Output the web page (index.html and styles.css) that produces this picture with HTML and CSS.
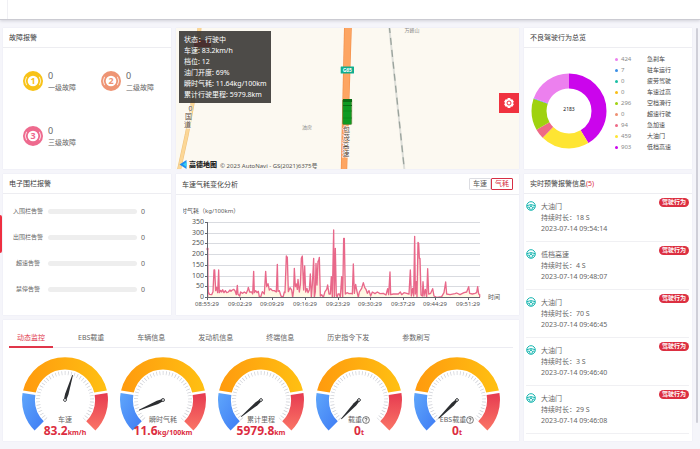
FILE: index.html
```html
<!DOCTYPE html>
<html lang="zh-CN">
<head>
<meta charset="utf-8">
<meta name="viewport" content="width=device-width, initial-scale=1">
<title>车辆监控</title>
<link rel="stylesheet" href="styles.css">
</head>
<body>
<svg class="defs" aria-hidden="true">
  <defs>
    <linearGradient id="blue" x1="0" y1="0" x2="1" y2="1"><stop offset="0" stop-color="#5fa6fb"/><stop offset="1" stop-color="#3f7cf4"/></linearGradient>
    <linearGradient id="orange" x1="0" y1="0" x2="1" y2="0"><stop offset="0" stop-color="#ff9a0e"/><stop offset="1" stop-color="#ffc012"/></linearGradient>
    <linearGradient id="red" x1="0" y1="0" x2="0" y2="1"><stop offset="0" stop-color="#e63a50"/><stop offset="1" stop-color="#fa7566"/></linearGradient>
    <symbol id="dial" viewBox="-43 -43 86 74">
      <path fill="url(#blue)" d="M-30.4 30.4A43 43 0 0 1 -42.4 -7L-29.6 -4.9A30 30 0 0 0 -21.2 21.2Z"/>
      <path fill="url(#orange)" d="M-41.9 -9.5A43 43 0 0 1 41.9 -9.5L29.2 -7.4A30 30 0 0 0 -29.2 -7.4Z"/>
      <path fill="url(#red)" d="M42.4 -7A43 43 0 0 1 30.4 30.4L21.2 21.2A30 30 0 0 0 29.6 -4.9Z"/>
      <path fill="none" stroke="#c9cbd2" stroke-width="4" pathLength="270" stroke-dasharray="1.4 5.325" d="M-19.1 19.1A27 27 0 1 1 19.1 19.1"/>
    </symbol>
    <symbol id="needle" viewBox="-43 -43 86 74">
      <path fill="#2c2e31" d="M-.4 -26H.4L1.7 -6L1.2 0H-1.2L-1.7 -6Z"/>
      <circle r="1.4" fill="#fff" stroke="#2c2e31" stroke-width=".9"/>
    </symbol>
    <symbol id="wheel" viewBox="0 0 10 10">
      <g fill="none" stroke="#16b5b0" stroke-width="1"><circle cx="5" cy="5" r="4.3"/><path d="M1 4.6Q5 2.6 9 4.6M1.2 6.2H3.4L4.2 9M8.8 6.2H6.6L5.8 9"/></g>
      <circle cx="5" cy="5.2" r="1" fill="#16b5b0"/>
    </symbol>
    <symbol id="ring" viewBox="0 0 20 20">
      <circle cx="10" cy="10" r="10"/>
      <circle cx="10" cy="10" r="5.3" fill="#fff"/>
      <path fill="none" stroke="#fff" stroke-width=".8" d="M3.600 5.800A7.700 7.700 0 0 0 3.600 14.200M16.400 5.800A7.700 7.700 0 0 1 16.400 14.200"/>
    </symbol>
    <symbol id="help" viewBox="0 0 8 8">
      <circle cx="4" cy="4" r="3.4" fill="none" stroke="#444" stroke-width=".7"/>
      <path fill="none" stroke="#444" stroke-width=".8" d="M2.9 3.2Q3 2.1 4 2.1T5.1 3.1Q5.1 3.8 4 4.2V4.8M4 5.4V6.2"/>
    </symbol>
  </defs>
</svg>

<header class="topbar"></header>
<button class="drawer" type="button" aria-label="展开"></button>

<main class="board">
  <section class="card fault">
    <h2 class="card-title">故障报警</h2>
    <ul class="fault-list">
      <li class="fault-item level1"><svg class="fault-icon" viewBox="0 0 20 20"><use href="#ring"/><text x="10" y="13">1</text></svg><p><b>0</b>一级故障</p></li>
      <li class="fault-item level2"><svg class="fault-icon" viewBox="0 0 20 20"><use href="#ring"/><text x="10" y="13">2</text></svg><p><b>0</b>二级故障</p></li>
      <li class="fault-item level3"><svg class="fault-icon" viewBox="0 0 20 20"><use href="#ring"/><text x="10" y="13">3</text></svg><p><b>0</b>三级故障</p></li>
    </ul>
  </section>

  <section class="card map">
    <svg class="map-canvas" viewBox="0 0 343 141" preserveAspectRatio="xMidYMid slice">
      <path class="road-edge" d="M23.5 -1L20 50L16.3 77L10.7 107L3 142"/>
      <path class="road" d="M23.5 -1L20 50L16.3 77L10.7 107L3 142"/>
      <path fill="#f3904a" d="M168 0H175.800L171.200 141H164.800Z"/>
      <path fill="#fda562" d="M168.700 0H175.100L170.600 141H165.500Z"/>
      <path fill="none" stroke="#dedfda" stroke-width="2" d="M213.300 0L228.300 141"/>
      <path fill="none" stroke="#9aa39c" stroke-width="1.300" stroke-dasharray="7 5" d="M213.300 -2L228.300 141"/>
      <rect x="18" y="12" width="17" height="7" rx="1" fill="#d81e2c"/>
      <g class="road-name">
        <text x="14.500" y="83">0</text><text x="12.500" y="91">国</text><text x="11.500" y="99">道</text>
        <text x="170.500" y="104">包</text><text x="170.500" y="112">茂</text><text x="170" y="120">高</text><text x="170" y="128">速</text>
      </g>
      <rect x="164.700" y="38.500" width="13.300" height="7" rx=".5" fill="#10ae8e"/>
      <text class="shield" x="171.300" y="44">G65</text>
      <rect x="166.700" y="71.500" width="9" height="25" rx="1" fill="#0f9a22" stroke="#6b7a3a" stroke-width=".6"/>
      <path fill="#0a6c14" d="M167 71H176V74H167ZM167 77H176V78H167Z"/>
      <path stroke="#0b8119" stroke-width=".6" d="M167 83H176M167 90H176"/>
      <text class="place" x="131" y="101">油房</text>
      <text class="place" x="236" y="4">万峰山</text>
      <path fill="#1d8df0" d="M3.500 136.500L10.500 132V141Z"/><path fill="#35d0ee" d="M7 136.500L10.500 134V139Z"/>
      <text class="brand" x="13" y="139">高德地图</text>
      <text class="copyright" x="44" y="140">© 2023 AutoNavi - GS(2021)6375号</text>
    </svg>
    <ul class="status">
      <li>状态：行驶中</li>
      <li>车速: 83.2km/h</li>
      <li>档位: 12</li>
      <li>油门开度: 69%</li>
      <li>瞬时气耗: 11.64kg/100km</li>
      <li>累计行驶里程: 5979.8km</li>
    </ul>
    <button class="settings" type="button" aria-label="设置">
      <svg viewBox="0 0 12 12"><path fill="#fff" d="M4.700 1H7.300L7.700 2.600L9.300 2.200L10.900 4.800L9.900 6L10.900 7.200L9.300 9.800L7.700 9.400L7.300 11H4.700L4.300 9.400L2.700 9.800L1.100 7.200L2.100 6L1.100 4.800L2.700 2.200L4.300 2.600Z"/><circle cx="6" cy="6" r="2" fill="#fff" stroke="#f0323f"/></svg>
    </button>
  </section>

  <section class="card behaviour">
    <h2 class="card-title">不良驾驶行为总览</h2>
    <div class="behaviour-body">
      <svg class="donut" viewBox="0 0 76 76">
        <g fill="none" stroke-width="15" transform="rotate(-90 38 38)">
          <circle cx="38" cy="38" r="30" pathLength="2183" stroke="#cb05ec" stroke-dasharray="903 1280"/>
          <circle cx="38" cy="38" r="30" pathLength="2183" stroke="#fee533" stroke-dasharray="459 1724" stroke-dashoffset="-903"/>
          <circle cx="38" cy="38" r="30" pathLength="2183" stroke="#ee6a86" stroke-dasharray="94 2089" stroke-dashoffset="-1362"/>
          <circle cx="38" cy="38" r="30" pathLength="2183" stroke="#9fd20f" stroke-dasharray="296 1887" stroke-dashoffset="-1456"/>
          <circle cx="38" cy="38" r="30" pathLength="2183" stroke="#3b8fe6" stroke-dasharray="7 2176" stroke-dashoffset="-1752"/>
          <circle cx="38" cy="38" r="30" pathLength="2183" stroke="#ec80ee" stroke-dasharray="424 1759" stroke-dashoffset="-1759"/>
        </g>
        <text x="38" y="38">2183</text>
      </svg>
      <ul class="legend">
        <li class="c1"><span>424</span>急刹车</li>
        <li class="c2"><span>7</span>驻车运行</li>
        <li class="c3"><span>0</span>疲劳驾驶</li>
        <li class="c4"><span>0</span>车速过高</li>
        <li class="c5"><span>296</span>空档滑行</li>
        <li class="c6"><span>0</span>超速行驶</li>
        <li class="c7"><span>94</span>急加速</li>
        <li class="c8"><span>459</span>大油门</li>
        <li class="c9"><span>903</span>低档高速</li>
      </ul>
    </div>
  </section>

  <section class="card fence">
    <h2 class="card-title">电子围栏报警</h2>
    <ul class="fence-list">
      <li><span class="fence-name">入围栏告警</span><span class="bar"></span><span>0</span></li>
      <li><span class="fence-name">出围栏告警</span><span class="bar"></span><span>0</span></li>
      <li><span class="fence-name">超速告警</span><span class="bar"></span><span>0</span></li>
      <li><span class="fence-name">禁停告警</span><span class="bar"></span><span>0</span></li>
    </ul>
  </section>

  <section class="card trend">
    <div class="card-title trend-head">
      <h2>车速气耗变化分析</h2>
      <div class="toggle"><button type="button">车速</button><button type="button" class="on">气耗</button></div>
    </div>
    <svg class="chart" viewBox="0 0 343 119">
      <defs>
        <clipPath id="plot-edge"><rect x="7" y="0" width="336" height="119"/></clipPath>
        <linearGradient id="area" x1="0" y1="0" x2="0" y2="1"><stop offset="0" stop-color="#f6b9c6"/><stop offset="1" stop-color="#fffbe6"/></linearGradient>
      </defs>
      <path stroke="#d9dbe0" stroke-width="1" d="M31 27.500H304M31 38.500H304M31 48.500H304M31 59.500H304M31 70.500H304M31 81.500H304M31 91.500H304"/>
      <g transform="translate(-1 -25) scale(.33333)">
        <path fill="url(#area)" stroke="#e8688a" stroke-width="4" stroke-linejoin="round" d="M98 382L98 237 99 340 100 365 103 373 110 374 114 365 117 300 119 300 122 362 125 352 128 368 131 300 133 368 137 361 140 366 143 359 147 368 151 362 155 368 160 366 165 360 168 364 172 360 176 358 180 362 184 374 187 346 189 373 194 378 197 366 203 370 208 366 214 370 218 360 220 352 224 366 230 366 233 372 236 304 238 368 242 362 246 368 250 364 253 380 257 381 262 365 268 372 272 304 275 350 279 341 283 360 287 356 292 362 298 362 304 366 307 283 309 364 313 362 318 378 324 382 328 366 330 368 334 258 337 262 340 365 345 353 350 360 353 382 356 360 358 295 361 350 364 342 367 358 369 328 373 366 376 345 379 265 382 258 386 360 389 288 392 366 396 355 399 368 403 360 406 312 409 382 412 345 416 265 418 382 421 366 423 280 426 345 429 274 431 272 433 262 436 378 440 374 445 382 450 365 455 358 458 345 462 372 466 372 469 320 472 382 476 180 478 382 481 235 484 378 487 380 489 372 493 372 496 382 500 320 503 382 506 205 508 205 511 372 516 368 522 371 528 370 532 372 535 282 538 370 542 343 545 360 550 382 553 366 560 355 565 338 569 352 573 358 577 370 582 362 587 378 592 366 600 371 607 366 615 371 625 370 633 375 638 356 641 374 645 306 647 374 655 372 670 372 676 366 680 374 687 368 695 370 702 372 706 300 709 378 713 355 716 378 719 199 721 372 724 335 726 382 729 217 731 220 733 265 735 265 738 375 742 378 744 335 747 378 751 358 755 382 758 296 761 372 767 370 773 356 777 378 785 382 800 380 807 368 812 336 815 372 825 374 840 371 845 369 855 374 867 368 875 366 881 350 884 370 892 372 900 370 905 368 908 350 911 372 914 374 914 382"/>
      </g>
      <circle cx="31.500" cy="54" r="1.200" fill="#fff" stroke="#e8688a" stroke-width=".5"/>
      <path fill="none" stroke="#63666e" stroke-width="1" d="M31.500 27V102.500H304M29 27.500H31M29 38.500H31M29 48.500H31M29 59.500H31M29 70.500H31M29 81.500H31M29 91.500H31M29 102.500H31M31.500 102V105M64.500 102V105M96.500 102V105M129.500 102V105M162.500 102V105M194.500 102V105M227.500 102V105M259.500 102V105M292.500 102V105"/>
      <g class="axis-y">
        <text x="28" y="29">350</text><text x="28" y="40">300</text><text x="28" y="50">250</text><text x="28" y="61">200</text><text x="28" y="72">150</text><text x="28" y="83">100</text><text x="28" y="93">50</text><text x="28" y="104">0</text>
      </g>
      <g class="axis-x">
        <text x="31" y="111">08:55:29</text><text x="64" y="111">09:02:29</text><text x="96" y="111">09:09:29</text><text x="129" y="111">09:16:29</text><text x="162" y="111">09:23:29</text><text x="194" y="111">09:30:29</text><text x="227" y="111">09:37:29</text><text x="259" y="111">09:44:29</text><text x="292" y="111">09:51:29</text>
      </g>
      <text x="312" y="104">时间</text>
      <g clip-path="url(#plot-edge)"><text x="-1" y="18">瞬时气耗（kg/100km）</text></g>
    </svg>
  </section>

  <section class="card alerts">
    <h2 class="card-title">实时预警报警信息<em>(5)</em></h2>
    <ul class="alert-list">
      <li><svg class="wheel"><use href="#wheel"/></svg><p>大油门<br>持续时长：18 S<br>2023-07-14 09:54:14</p><span class="tag">驾驶行为</span></li>
      <li><svg class="wheel"><use href="#wheel"/></svg><p>低档高速<br>持续时长：4 S<br>2023-07-14 09:48:07</p><span class="tag">驾驶行为</span></li>
      <li><svg class="wheel"><use href="#wheel"/></svg><p>大油门<br>持续时长：70 S<br>2023-07-14 09:46:45</p><span class="tag">驾驶行为</span></li>
      <li><svg class="wheel"><use href="#wheel"/></svg><p>大油门<br>持续时长：3 S<br>2023-07-14 09:46:40</p><span class="tag">驾驶行为</span></li>
      <li><svg class="wheel"><use href="#wheel"/></svg><p>大油门<br>持续时长：29 S<br>2023-07-14 09:46:08</p><span class="tag">驾驶行为</span></li>
    </ul>
  </section>

  <section class="card monitor">
    <nav class="tabs">
      <button type="button" class="on">动态监控</button>
      <button type="button">EBS载重</button>
      <button type="button">车辆信息</button>
      <button type="button">发动机信息</button>
      <button type="button">终端信息</button>
      <button type="button">历史指令下发</button>
      <button type="button">参数刷写</button>
    </nav>
    <div class="gauges">
      <figure class="gauge"><svg viewBox="-43 -43 86 74"><use href="#dial" x="-43" y="-43" width="86" height="74"/><g transform="rotate(17)"><use href="#needle" x="-43" y="-43" width="86" height="74"/></g></svg><figcaption><span>车速</span><strong>83.2<small>km/h</small></strong></figcaption></figure>
      <figure class="gauge"><svg viewBox="-43 -43 86 74"><use href="#dial" x="-43" y="-43" width="86" height="74"/><g transform="rotate(-113)"><use href="#needle" x="-43" y="-43" width="86" height="74"/></g></svg><figcaption><span>瞬时气耗</span><strong>11.6<small>kg/100km</small></strong></figcaption></figure>
      <figure class="gauge"><svg viewBox="-43 -43 86 74"><use href="#dial" x="-43" y="-43" width="86" height="74"/><g transform="rotate(-130)"><use href="#needle" x="-43" y="-43" width="86" height="74"/></g></svg><figcaption><span>累计里程</span><strong>5979.8<small>km</small></strong></figcaption></figure>
      <figure class="gauge"><svg viewBox="-43 -43 86 74"><use href="#dial" x="-43" y="-43" width="86" height="74"/><g transform="rotate(-137)"><use href="#needle" x="-43" y="-43" width="86" height="74"/></g></svg><figcaption><span>载重<svg class="help"><use href="#help"/></svg></span><strong>0<small>t</small></strong></figcaption></figure>
      <figure class="gauge"><svg viewBox="-43 -43 86 74"><use href="#dial" x="-43" y="-43" width="86" height="74"/><g transform="rotate(-135)"><use href="#needle" x="-43" y="-43" width="86" height="74"/></g></svg><figcaption><span>EBS载重<svg class="help"><use href="#help"/></svg></span><strong>0<small>t</small></strong></figcaption></figure>
    </div>
  </section>
</main>
<div class="scroll-thumb"></div>
</body>
</html>
```
FILE: styles.css
```css
* { box-sizing: border-box; margin: 0; padding: 0; }

body {
  background: #f5f5fa;
  color: #666;
  font: 7px/11px "Noto Sans", "Noto Sans CJK SC", sans-serif;
}

ul { list-style: none; }
h2 { font-size: 7px; font-weight: 400; }
em { font-style: normal; }
button { font: inherit; color: inherit; background: none; border: 0; cursor: pointer; }
svg { display: block; }
.defs { position: absolute; width: 0; height: 0; }

.topbar {
  height: 20px;
  padding-left: 7px;
  background: #fff;
  border-bottom: 1px solid #cbcbd2;
  box-shadow: 0 1px 3px #d0d0d8;
}
.topbar::before { content: ""; display: block; height: 19px; border-left: 1px solid #f0f0f4; }

.drawer {
  position: absolute;
  left: 0;
  top: 215px;
  width: 2px;
  height: 38px;
  background: #ee2f40;
  border-radius: 0 2px 2px 0;
}

.board {
  display: grid;
  grid-template-columns: 168fr 343fr 168fr;
  grid-template-rows: minmax(141px, auto) minmax(141px, auto) minmax(121px, auto);
  grid-template-areas: "fault map behaviour" "fence trend alerts" "monitor monitor alerts";
  gap: 5px;
  padding: 8px 8px 8px 3px;
}
.fault { grid-area: fault; }
.map { grid-area: map; }
.behaviour { grid-area: behaviour; }
.fence { grid-area: fence; }
.trend { grid-area: trend; }
.alerts { grid-area: alerts; }
.monitor { grid-area: monitor; }

.card { min-width: 0; background: #fff; box-shadow: 0 0 1px #dfe0ea; }
.card-title {
  height: 20px;
  padding: 0 6px;
  color: #3c3c3c;
  line-height: 19px;
  border-bottom: 1px solid #ededf1;
}
.card-title em { color: #dc2c40; }

.fault-list { display: grid; grid-template-columns: 78px 1fr; row-gap: 30px; padding: 20px 0 0 20px; }
.fault-item { display: flex; align-items: center; gap: 5px; height: 25px; }
.fault-item b { display: block; font-size: 9px; line-height: 13px; font-weight: 400; }
.fault-icon { width: 20px; height: 20px; fill: currentColor; }
.fault-icon text { font-size: 9px; font-weight: 700; text-anchor: middle; }
.level1 .fault-icon { color: #f8c217; }
.level2 .fault-icon { color: #ee9474; }
.level3 .fault-icon { color: #ee6a8e; }

.map { position: relative; overflow: hidden; background: #fcf9f1; }
.map-canvas { width: 100%; height: 100%; }
.road-edge { fill: none; stroke: #edc07c; stroke-width: 4; }
.road { fill: none; stroke: #fcd796; stroke-width: 3; }
.road-name { font-size: 7px; text-anchor: middle; fill: #5b4632; stroke: #fff; stroke-width: 1px; paint-order: stroke; }
.shield { font-size: 5px; font-weight: 700; text-anchor: middle; fill: #fff; }
.place { font-size: 5px; text-anchor: middle; fill: #8a8a8a; }
.brand { font-size: 7px; font-weight: 900; fill: #222; }
.copyright { font-size: 6px; fill: #555; }
.status {
  position: absolute;
  left: 3px;
  top: 3px;
  padding: 3px 4px 3px 5px;
  color: #fff;
  background: rgba(52, 50, 48, .88);
}
.settings {
  position: absolute;
  right: 0;
  top: 65px;
  width: 20px;
  height: 20px;
  padding: 4px;
  background: #f0323f;
}

.behaviour-body { display: flex; align-items: flex-start; gap: 8px; padding: 5px 7px 0; }
.donut { width: 76px; height: 76px; margin-top: 20px; }
.donut text { font-size: 5px; fill: #111; text-anchor: middle; }
.legend { flex: 1; padding-top: 1px; font-size: 6px; color: #444; }
.legend li { display: flex; align-items: center; height: 11px; }
.legend li::before { content: ""; width: 3px; height: 3px; margin-right: 3px; border-radius: 50%; background: currentColor; }
.legend span { width: 26px; color: #8a8a8a; }
.legend .c1::before { background: #ec80ee; }
.legend .c2::before { background: #3b8fe6; }
.legend .c3::before { background: #1abfa4; }
.legend .c4::before { background: #f9bd15; }
.legend .c5::before { background: #9fd20f; }
.legend .c6::before { background: #ee8f72; }
.legend .c7::before { background: #ee6a86; }
.legend .c8::before { background: #fee533; }
.legend .c9::before { background: #cb05ec; }

.fence-list { display: grid; row-gap: 15px; padding: 12px 26px 0 9px; }
.fence-list li { display: flex; align-items: center; gap: 4px; }
.fence-name { width: 32px; font-size: 6px; text-align: center; }
.bar { flex: 1; height: 5px; border-radius: 3px; background: #eee; }

.trend-head { display: flex; justify-content: space-between; align-items: center; height: 21px; }
.toggle { display: flex; }
.toggle button { width: 22px; height: 12px; line-height: 10px; color: #555; border: 1px solid #dcdde2; border-radius: 1px; }
.toggle .on { color: #d62f45; border-color: #d62f45; }
.chart { width: 100%; font-size: 6px; fill: #555; }
.axis-y { font-size: 7px; text-anchor: end; }
.axis-x { text-anchor: middle; }

.alert-list { padding: 0 3px 0 2px; }
.alert-list li { display: flex; align-items: flex-start; gap: 5px; padding: 7px 0; border-bottom: 1px solid #f0f0f3; }
.alert-list p { flex: 1; }
.wheel { width: 10px; height: 10px; }
.tag {
  margin-top: -3px;
  padding: 0 3px;
  color: #fff;
  font-size: 6px;
  font-weight: 700;
  line-height: 9px;
  background: #dc2f41;
  border-radius: 5px;
}

.tabs { display: flex; gap: 17px; margin: 8px 6px 0; border-bottom: 1px solid #ececf2; }
.tabs button { height: 20px; margin-bottom: -1px; padding: 0 8px; border-bottom: 2px solid transparent; }
.tabs .on { color: #e0364a; border-color: #e0364a; }

.gauges { display: grid; grid-template-columns: repeat(5, 1fr); padding: 9px 13px 0; }
.gauge { display: grid; justify-items: center; height: 82px; }
.gauge > svg, .gauge figcaption { grid-area: 1 / 1; }
.gauge > svg { width: 86px; height: 74px; }
.gauge figcaption { align-self: end; text-align: center; }
.gauge span { display: flex; justify-content: center; align-items: center; }
.gauge strong { display: block; color: #dc2c40; font-size: 12px; line-height: 12px; }
.gauge small { font-size: 7px; }
.help { width: 8px; height: 8px; }

.scroll-thumb { position: absolute; top: 28px; right: 2px; width: 2px; height: 395px; background: #cfcfd8; border-radius: 1px; }
```
